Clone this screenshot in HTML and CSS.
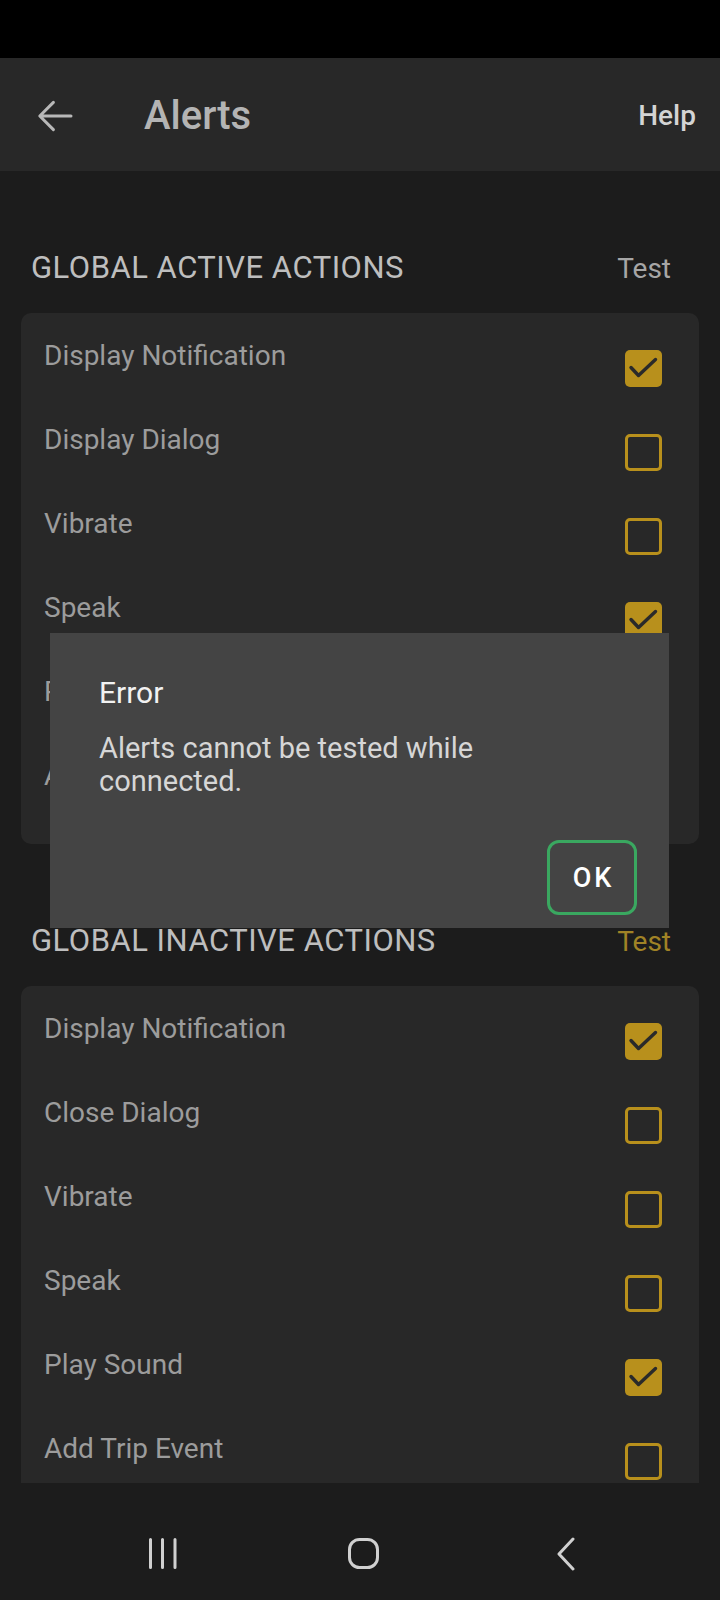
FILE: index.html
```html
<!DOCTYPE html>
<html lang="en">

<head>
    <meta charset="UTF-8">
    <meta name="viewport" content="width=device-width, initial-scale=1.0">
    <link rel="stylesheet" href="styles.css">
    <title>Alerts</title>
</head>

<body>
    <div class="screen">
        <div class="statusBar"></div>

        <header class="appBar">
            <button type="button" class="backBtn">
                <svg width="48" height="48" viewBox="0 0 24 24">
                    <path d="M20 12H4.8M11.2 5.2L4.4 12l6.8 6.8" fill="none" stroke="#b8b8b8" stroke-width="1.5" stroke-linecap="round" stroke-linejoin="round"/>
                </svg>
            </button>
            <h1 class="title">Alerts</h1>
            <span class="help">Help</span>
        </header>

        <main class="content">
            <!-- Acciones con la conexión activa -->
            <section class="group">
                <div class="groupHead">
                    <h2>GLOBAL ACTIVE ACTIONS</h2>
                    <span class="test">Test</span>
                </div>
                <ul class="card">
                    <li class="row"><span class="label">Display Notification</span><span class="check on"><svg width="37" height="37" viewBox="0 0 37 37"><polyline points="6,17.5 13.5,25.5 30.5,9.5" /></svg></span></li>
                    <li class="row"><span class="label">Display Dialog</span><span class="check"></span></li>
                    <li class="row"><span class="label">Vibrate</span><span class="check"></span></li>
                    <li class="row"><span class="label">Speak</span><span class="check on"><svg width="37" height="37" viewBox="0 0 37 37"><polyline points="6,17.5 13.5,25.5 30.5,9.5" /></svg></span></li>
                    <li class="row"><span class="label">Play Sound</span><span class="check on"><svg width="37" height="37" viewBox="0 0 37 37"><polyline points="6,17.5 13.5,25.5 30.5,9.5" /></svg></span></li>
                    <li class="row"><span class="label">Add Trip Event</span><span class="check"></span></li>
                </ul>
            </section>

            <!-- Acciones con la conexión inactiva -->
            <section class="group">
                <div class="groupHead">
                    <h2>GLOBAL INACTIVE ACTIONS</h2>
                    <span class="test gold">Test</span>
                </div>
                <ul class="card">
                    <li class="row"><span class="label">Display Notification</span><span class="check on"><svg width="37" height="37" viewBox="0 0 37 37"><polyline points="6,17.5 13.5,25.5 30.5,9.5" /></svg></span></li>
                    <li class="row"><span class="label">Close Dialog</span><span class="check"></span></li>
                    <li class="row"><span class="label">Vibrate</span><span class="check"></span></li>
                    <li class="row"><span class="label">Speak</span><span class="check"></span></li>
                    <li class="row"><span class="label">Play Sound</span><span class="check on"><svg width="37" height="37" viewBox="0 0 37 37"><polyline points="6,17.5 13.5,25.5 30.5,9.5" /></svg></span></li>
                    <li class="row"><span class="label">Add Trip Event</span><span class="check"></span></li>
                </ul>
            </section>
        </main>

        <!-- Diálogo de error -->
        <div class="dialog">
            <h3 class="dialogTitle">Error</h3>
            <p class="dialogText">Alerts cannot be tested while<br>connected.</p>
            <button type="button" class="okBtn">OK</button>
        </div>

        <nav class="navBar">
            <svg class="navRecents" width="32" height="32" viewBox="0 0 32 32">
                <path d="M3.5 2.5v28M15.5 2.5v28M28 2.5v28" stroke="#d0d0d0" stroke-width="3" stroke-linecap="round"/>
            </svg>
            <svg class="navHome" width="34" height="34" viewBox="0 0 34 34">
                <rect x="3.5" y="2.5" width="28" height="28" rx="10" fill="none" stroke="#d0d0d0" stroke-width="3"/>
            </svg>
            <svg class="navBack" width="24" height="34" viewBox="0 0 24 34">
                <polyline points="19,2 5,17 19,32" fill="none" stroke="#d0d0d0" stroke-width="3" stroke-linecap="round" stroke-linejoin="round"/>
            </svg>
        </nav>
    </div>
</body>

</html>
```

FILE: styles.css
```css
* {
    box-sizing: border-box;
}

body {
    margin: 0;
    background-color: #1c1c1c;
    font-family: Roboto, "Liberation Sans", sans-serif;
}

.screen {
    position: relative;
    width: 720px;
    height: 1600px;
    display: flex;
    flex-direction: column;
    overflow: hidden;
}

.statusBar {
    height: 58px;
    background: #000;
}

.appBar {
    height: 113px;
    background: #282828;
    display: flex;
    align-items: center;
    padding: 2px 24px 0 31px;
}

.backBtn {
    width: 48px;
    height: 48px;
    padding: 0;
    border: none;
    background: none;
}

.title {
    margin: 0 0 0 65px;
    flex: 1;
    font-size: 40px;
    font-weight: 500;
    line-height: 46px;
    color: #b4b4b4;
}

.help {
    font-size: 28px;
    font-weight: 500;
    color: #d4d4d4;
}

.content {
    flex: 1;
    overflow: hidden;
    padding-top: 77px;
}

.group + .group {
    margin-top: 77px;
}

.groupHead {
    display: flex;
    justify-content: space-between;
    align-items: baseline;
    padding: 0 49px 0 31px;
    line-height: 40px;
}

.groupHead h2 {
    margin: 0;
    font-size: 31px;
    font-weight: 400;
    letter-spacing: 0.5px;
    color: #bebebe;
}

.test {
    font-size: 28px;
    color: #a6a6a6;
}

.test.gold {
    color: #a08326;
}

.card {
    list-style: none;
    margin: 24px 21px 0;
    padding: 13px 0 14px;
    background: #282828;
    border-radius: 10px;
}

.row {
    height: 84px;
    display: flex;
    justify-content: space-between;
    padding: 0 37px 0 23px;
}

.label {
    padding-top: 12px;
    font-size: 28px;
    line-height: 36px;
    color: #9c9c9c;
}

.check {
    align-self: center;
    width: 37px;
    height: 37px;
    border: 3px solid #b8901c;
    border-radius: 5px;
}

.check.on {
    border: none;
    background: #b8901c;
}

.check svg {
    display: block;
}

.check polyline {
    fill: none;
    stroke: #2a2a2a;
    stroke-width: 3.4;
    stroke-linecap: round;
    stroke-linejoin: round;
}

.dialog {
    position: absolute;
    left: 50px;
    top: 633px;
    width: 619px;
    height: 295px;
    background: #444;
    padding: 42px 32px 13px 49px;
    display: flex;
    flex-direction: column;
}

.dialogTitle {
    margin: 0;
    font-size: 30px;
    font-weight: 400;
    line-height: 36px;
    color: #f2f2f2;
}

.dialogText {
    margin: 21px 0 0;
    font-size: 29px;
    line-height: 33px;
    color: #d6d6d6;
}

.okBtn {
    margin-top: auto;
    align-self: flex-end;
    width: 90px;
    height: 75px;
    border: 3px solid #3aa860;
    border-radius: 12px;
    background: none;
    font-family: Roboto, "Liberation Sans", sans-serif;
    font-size: 27px;
    font-weight: 500;
    letter-spacing: 3px;
    padding: 0 0 0 3px;
    color: #fff;
}

.navBar {
    height: 117px;
    display: flex;
    align-items: flex-start;
    padding: 54px 0 0 147px;
}

.navHome {
    margin-left: 167px;
}

.navBack {
    margin-left: 174px;
}
```
